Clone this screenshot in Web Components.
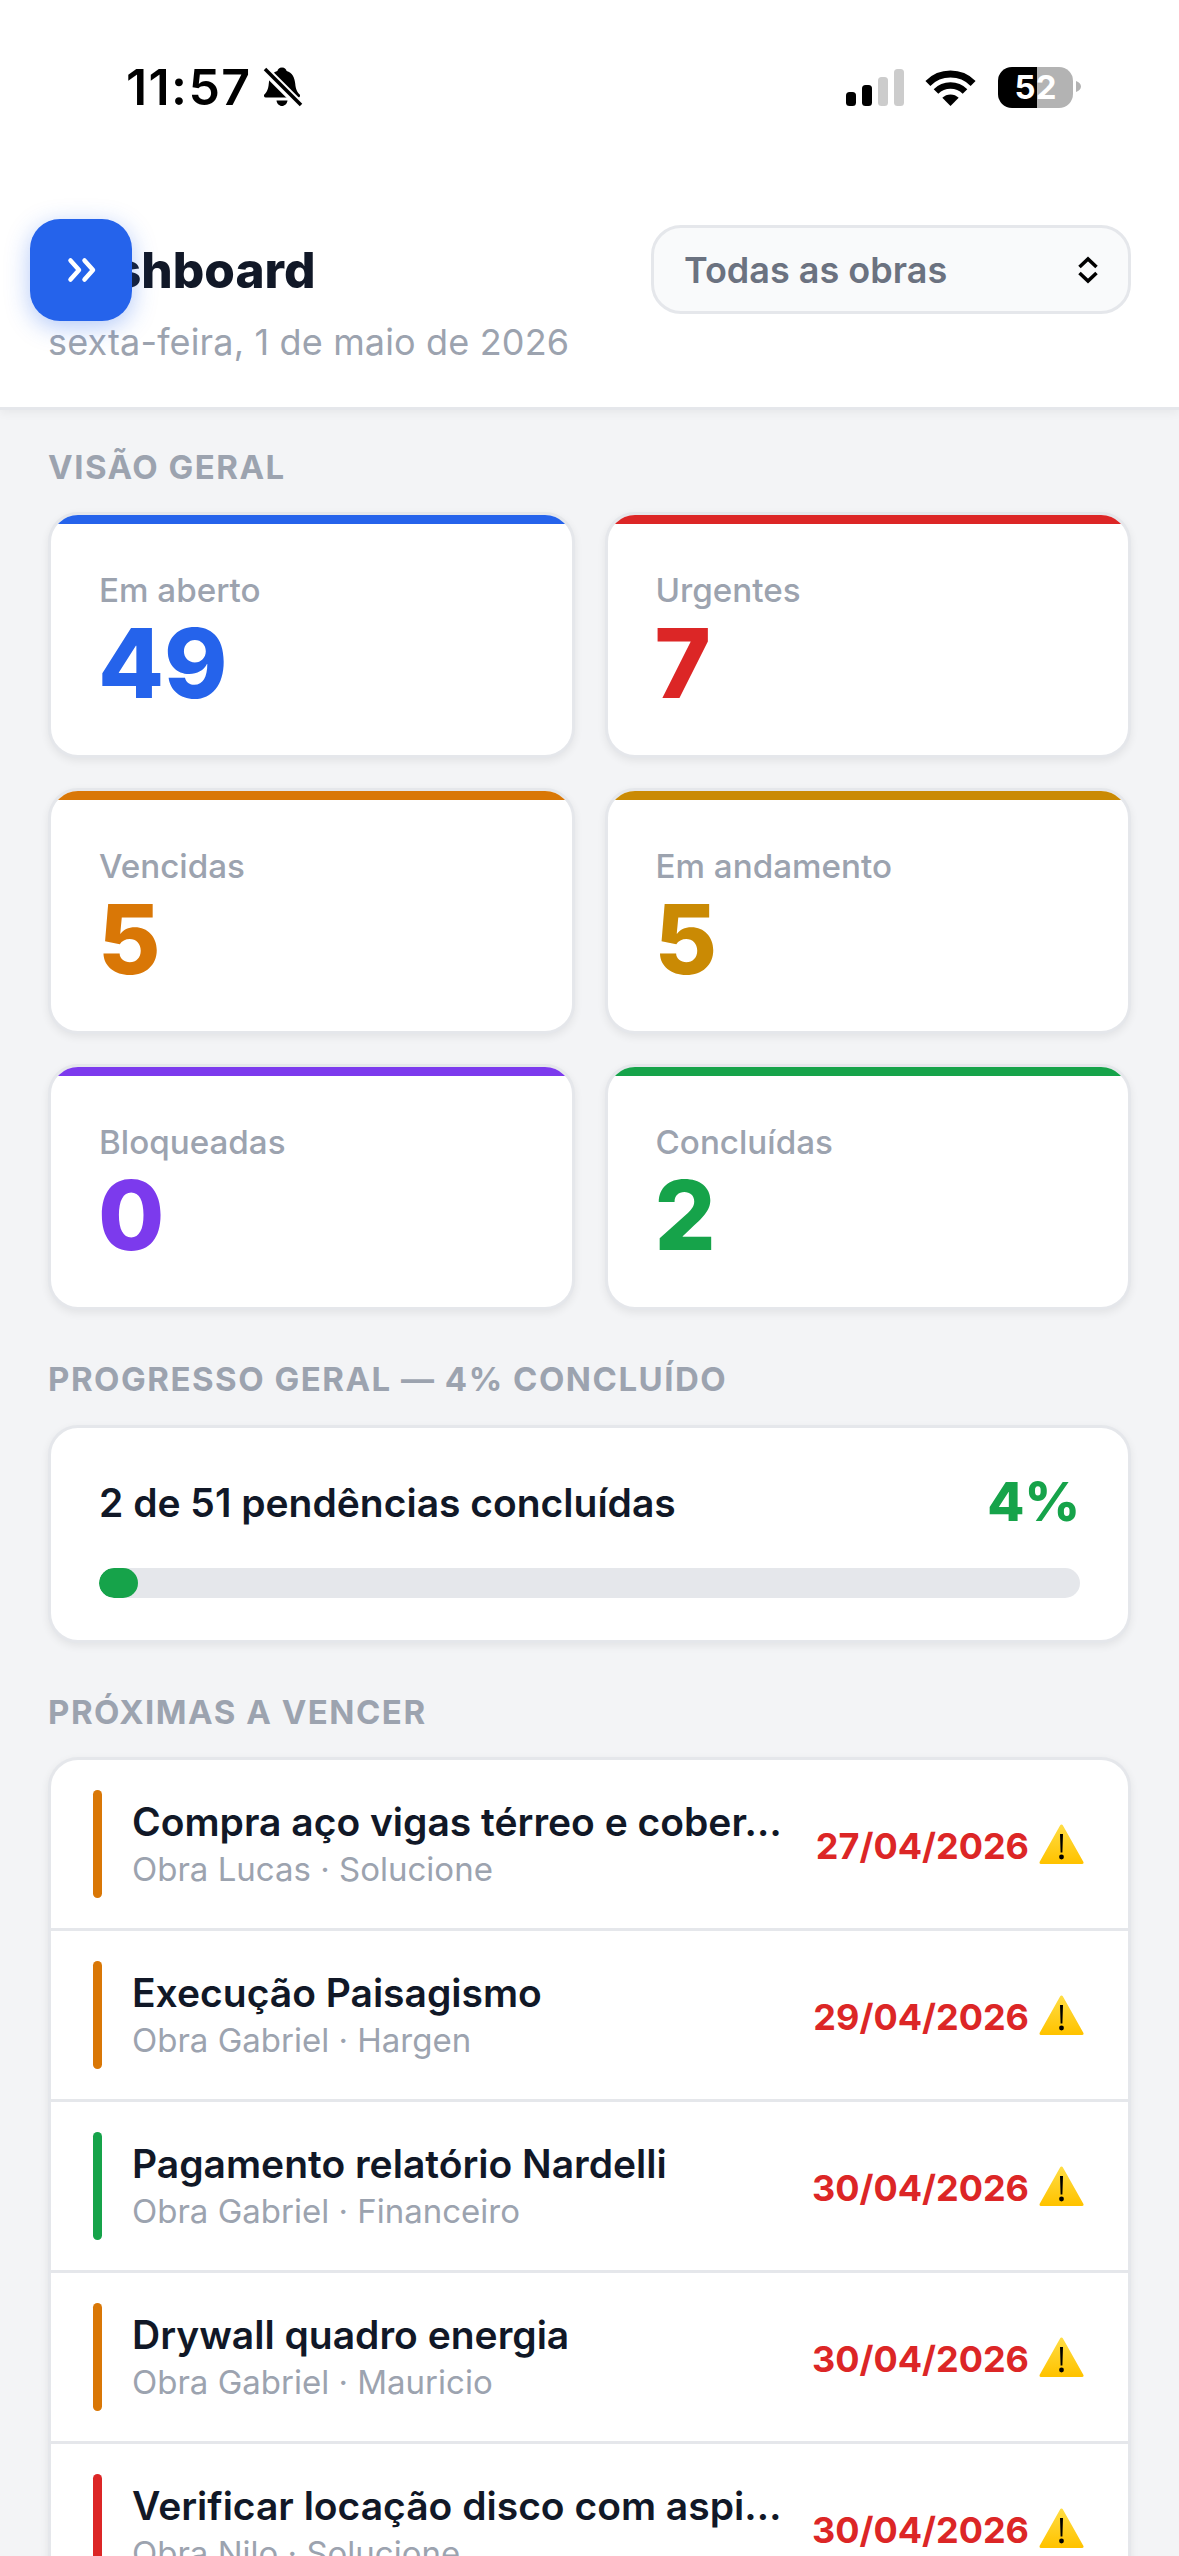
<!DOCTYPE html>
<html lang="pt-BR"><head><meta charset="utf-8"><title>Dashboard</title>
<style>
html,body{margin:0;padding:0;height:2556px;overflow:hidden;background:#f3f4f6;font-family:Inter,"Liberation Sans",sans-serif}
app-dashboard{display:block}
</style></head><body>
<app-dashboard></app-dashboard>
<script>
function def(name, css, html){
  customElements.define(name, class extends HTMLElement{
    connectedCallback(){
      if(this.shadowRoot) return;
      const r=this.attachShadow({mode:'open'});
      const a=n=>this.getAttribute(n)||'';
      r.innerHTML='<style>'+css+'</style>'+(typeof html==='function'?html(a):html);
    }
  });
}
def('status-bar',`
:host{display:flex;justify-content:space-between;height:150px;box-sizing:border-box;padding:67px 98px 0 126px;color:#000}
.l,.r{display:flex;height:41px}
.l{align-items:center;gap:11px}
.t{font:600 50px/41px Inter,sans-serif;letter-spacing:1.400px}
.r{align-items:flex-start}
.sig{display:block;margin:2px 21px 0 0}
.wifi{display:block;margin:2px 22px 0 0}
.bat{position:relative;width:75px;height:41px;border-radius:14px;background:linear-gradient(90deg,#000 0 39px,#b3b3b3 39px);color:#fff;font:700 33px/41px Inter,sans-serif;text-align:center}
.nub{display:block;margin:14px 0 0 3px}
`,`<div class="l"><span class="t">11:57</span>
<svg width="41" height="41" viewBox="0 0 41 41"><path fill="#000" d="M20 .5c3 0 4.200 2 4.600 3.600 5.600 1.800 8 6.300 8.600 12.400.6 6.200 2 8.500 4.300 10.800 1.200 1.300.5 3.200-1.400 3.200H3.900c-1.900 0-2.600-1.900-1.400-3.200 2.300-2.300 3.700-4.600 4.300-10.800.6-6.100 3-10.600 8.600-12.400C15.800 2.500 17 .5 20 .5zM14.500 33.500h11c-.4 3.200-2.700 5.500-5.500 5.500s-5.100-2.300-5.500-5.500z"/><path d="M3 3l35 35" stroke="#fff" stroke-width="9"/><path d="M3 2l36 36" stroke="#000" stroke-width="3.600"/></svg></div>
<div class="r">
<svg class="sig" width="58" height="37" viewBox="0 0 58 37"><rect x="0" y="23" width="10" height="14" rx="3.500"/><rect x="16" y="16" width="10" height="21" rx="3.500"/><rect x="32" y="8" width="10" height="29" rx="3.500" fill="#ccc"/><rect x="48" y="0" width="10" height="37" rx="3.500" fill="#ccc"/></svg>
<svg class="wifi" width="51" height="37" viewBox="0 0 51 37"><path d="M2.900 14.400A32 32 0 0 1 48.100 14.400" fill="none" stroke="#000" stroke-width="7"/><path d="M11 22.500A20.500 20.500 0 0 1 40 22.500" fill="none" stroke="#000" stroke-width="6.500"/><path d="M25.500 37L17.300 28.800A11.600 11.600 0 0 1 33.700 28.800Z"/></svg>
<div class="bat">52</div>
<svg class="nub" width="5" height="11" viewBox="0 0 5 11"><path d="M0 0c3 1 5 3 5 5.500S3 10 0 11z" fill="#b3b3b3"/></svg>
</div>`);

def('obra-select',`
:host{display:flex;align-items:center;justify-content:space-between;box-sizing:border-box;width:480px;height:89px;border:3px solid #e5e7eb;border-radius:30px;background:#f9fafb;padding:0 27px 0 30px;color:#6b7280;font:600 36px/1 Inter,sans-serif}
svg{display:block}
`,a=>`<span>${a('label')}</span><svg width="26" height="32" viewBox="0 0 26 32"><path d="M4.500 13L13 5l8.500 8M4.500 19L13 27l8.500-8" fill="none" stroke="#000" stroke-width="3.600"/></svg>`);

def('app-header',`
:host{display:block;position:relative;background:#fff;border-bottom:3px solid #e5e7eb;box-shadow:0 3px 9px rgba(0,0,0,.05)}
.b{padding:75px 48px 43px}
.top{display:flex;align-items:center;justify-content:space-between}
h1{margin:0;font:800 49.500px/60px Inter,sans-serif;color:#111827}
p{margin:6px 0 0;font:400 36px/44px Inter,sans-serif;color:#9ca3af;letter-spacing:.15px}
.fab{position:absolute;left:30px;top:219px;width:102px;height:102px;border-radius:30px;background:#2563eb;box-shadow:0 6px 24px rgba(37,99,235,.35);display:flex;align-items:center;justify-content:center}
svg{display:block}
`,a=>`<status-bar></status-bar><div class="b"><div class="top"><h1>${a('title')}</h1><obra-select label="Todas as obras"></obra-select></div><p>${a('date')}</p></div>
<div class="fab"><svg width="32" height="28" viewBox="0 0 32 28"><path d="M5.500 4.500l8.500 9.500-8.500 9.500M19.500 4.500l8.500 9.500-8.500 9.500" fill="none" stroke="#fff" stroke-width="4.500" stroke-linecap="round" stroke-linejoin="round"/></svg></div>`);

def('section-label',`
:host{display:block;font:700 33px/40px Inter,sans-serif;color:#9ca3af;letter-spacing:1.500px}
`,`<slot></slot>`);

def('stat-card',`
:host{display:block;box-sizing:border-box;height:246px;background:#fff;border:3px solid #e5e7eb;border-radius:30px;box-shadow:0 3px 9px rgba(0,0,0,.07);overflow:hidden}
.bar{height:9px;background:var(--c)}
.in{padding:46px 48px 0}
.l{font:500 33.200px/40px Inter,sans-serif;color:#9ca3af;white-space:nowrap}
.n{font:800 96px/96px Inter,sans-serif;color:var(--c);margin:5px 0 0 -1px}
`,a=>`<div class="bar" style="--c:${a('color')}"></div><div class="in"><div class="l">${a('label')}</div><div class="n" style="--c:${a('color')}">${a('value')}</div></div>`);

def('progress-card',`
:host{display:block;box-sizing:border-box;height:218px;background:#fff;border:3px solid #e5e7eb;border-radius:30px;box-shadow:0 3px 9px rgba(0,0,0,.07);padding:44px 48px 0}
.h{display:flex;justify-content:space-between;align-items:center;height:60px}
.t{font:600 39px/1 Inter,sans-serif;color:#111827}
.p{font:800 54px/1 Inter,sans-serif;color:#16a34a}
.tr{margin-top:36px;height:30px;border-radius:15px;background:#e5e7eb;overflow:hidden}
.f{width:39px;height:30px;border-radius:15px;background:#16a34a}
`,a=>`<div class="h"><span class="t">${a('text')}</span><span class="p">${a('pct')}</span></div><div class="tr"><div class="f"></div></div>`);

def('due-row',`
:host{display:flex;align-items:center;box-sizing:border-box;height:171px;border-bottom:3px solid #e5e7eb;padding:0 44px 0 42px}
.bar{flex:none;width:9px;height:108px;border-radius:5px;background:var(--c);margin-right:30px}
.m{flex:1;min-width:0}
.t{font:600 39px/48px Inter,sans-serif;color:#111827;white-space:nowrap}
.s{font:400 33px/42px Inter,sans-serif;color:#9ca3af;white-space:nowrap;margin-top:2px}
.d{flex:none;font:700 36px/1 Inter,sans-serif;color:#dc2626;margin:3px 10px 0 0;white-space:nowrap}
svg{display:block;flex:none;margin-top:1px}
`,a=>`<div class="bar" style="--c:${a('color')}"></div><div class="m"><div class="t">${a('title')}</div><div class="s">${a('sub')}</div></div><div class="d">${a('date')}</div>
<svg width="45" height="41" viewBox="0 0 45 41"><defs><linearGradient id="g" x1="0" y1="0" x2="0" y2="1"><stop offset="0" stop-color="#ffdc42"/><stop offset="1" stop-color="#ffc300"/></linearGradient></defs><path d="M22.500 2L43 38.500H2Z" fill="url(#g)" stroke="url(#g)" stroke-width="3" stroke-linejoin="round"/><path d="M21 10h3l-.6 18.500h-1.800z" fill="#000"/><circle cx="22.500" cy="33" r="2.400" fill="#000"/></svg>`);

def('due-list',`
:host{display:block;background:#fff;border:3px solid #e5e7eb;border-bottom:0;border-radius:30px 30px 0 0;overflow:hidden;box-shadow:0 3px 9px rgba(0,0,0,.07)}
`,`<slot></slot>`);

def('app-dashboard',`
:host{display:block}
main{padding:37px 48px 0}
.g{display:grid;grid-template-columns:1fr 1fr;gap:30px;margin:25px 0 49px}
progress-card{margin:26px 0 49px}
due-list{margin-top:25px}
`,`<app-header title="Dashboard" date="sexta-feira, 1 de maio de 2026"></app-header>
<main>
<section-label>VISÃO GERAL</section-label>
<div class="g">
<stat-card label="Em aberto" value="49" color="#2563eb"></stat-card>
<stat-card label="Urgentes" value="7" color="#dc2626"></stat-card>
<stat-card label="Vencidas" value="5" color="#d97706"></stat-card>
<stat-card label="Em andamento" value="5" color="#ca8a04"></stat-card>
<stat-card label="Bloqueadas" value="0" color="#7c3aed"></stat-card>
<stat-card label="Concluídas" value="2" color="#16a34a"></stat-card>
</div>
<section-label>PROGRESSO GERAL — 4% CONCLUÍDO</section-label>
<progress-card text="2 de 51 pendências concluídas" pct="4%"></progress-card>
<section-label>PRÓXIMAS A VENCER</section-label>
<due-list>
<due-row color="#d97706" title="Compra aço vigas térreo e cober…" sub="Obra Lucas · Solucione" date="27/04/2026"></due-row>
<due-row color="#d97706" title="Execução Paisagismo" sub="Obra Gabriel · Hargen" date="29/04/2026"></due-row>
<due-row color="#16a34a" title="Pagamento relatório Nardelli" sub="Obra Gabriel · Financeiro" date="30/04/2026"></due-row>
<due-row color="#d97706" title="Drywall quadro energia" sub="Obra Gabriel · Mauricio" date="30/04/2026"></due-row>
<due-row color="#dc2626" title="Verificar locação disco com aspi…" sub="Obra Nilo · Solucione" date="30/04/2026"></due-row>
</due-list>
</main>`);
</script>
</body></html>
